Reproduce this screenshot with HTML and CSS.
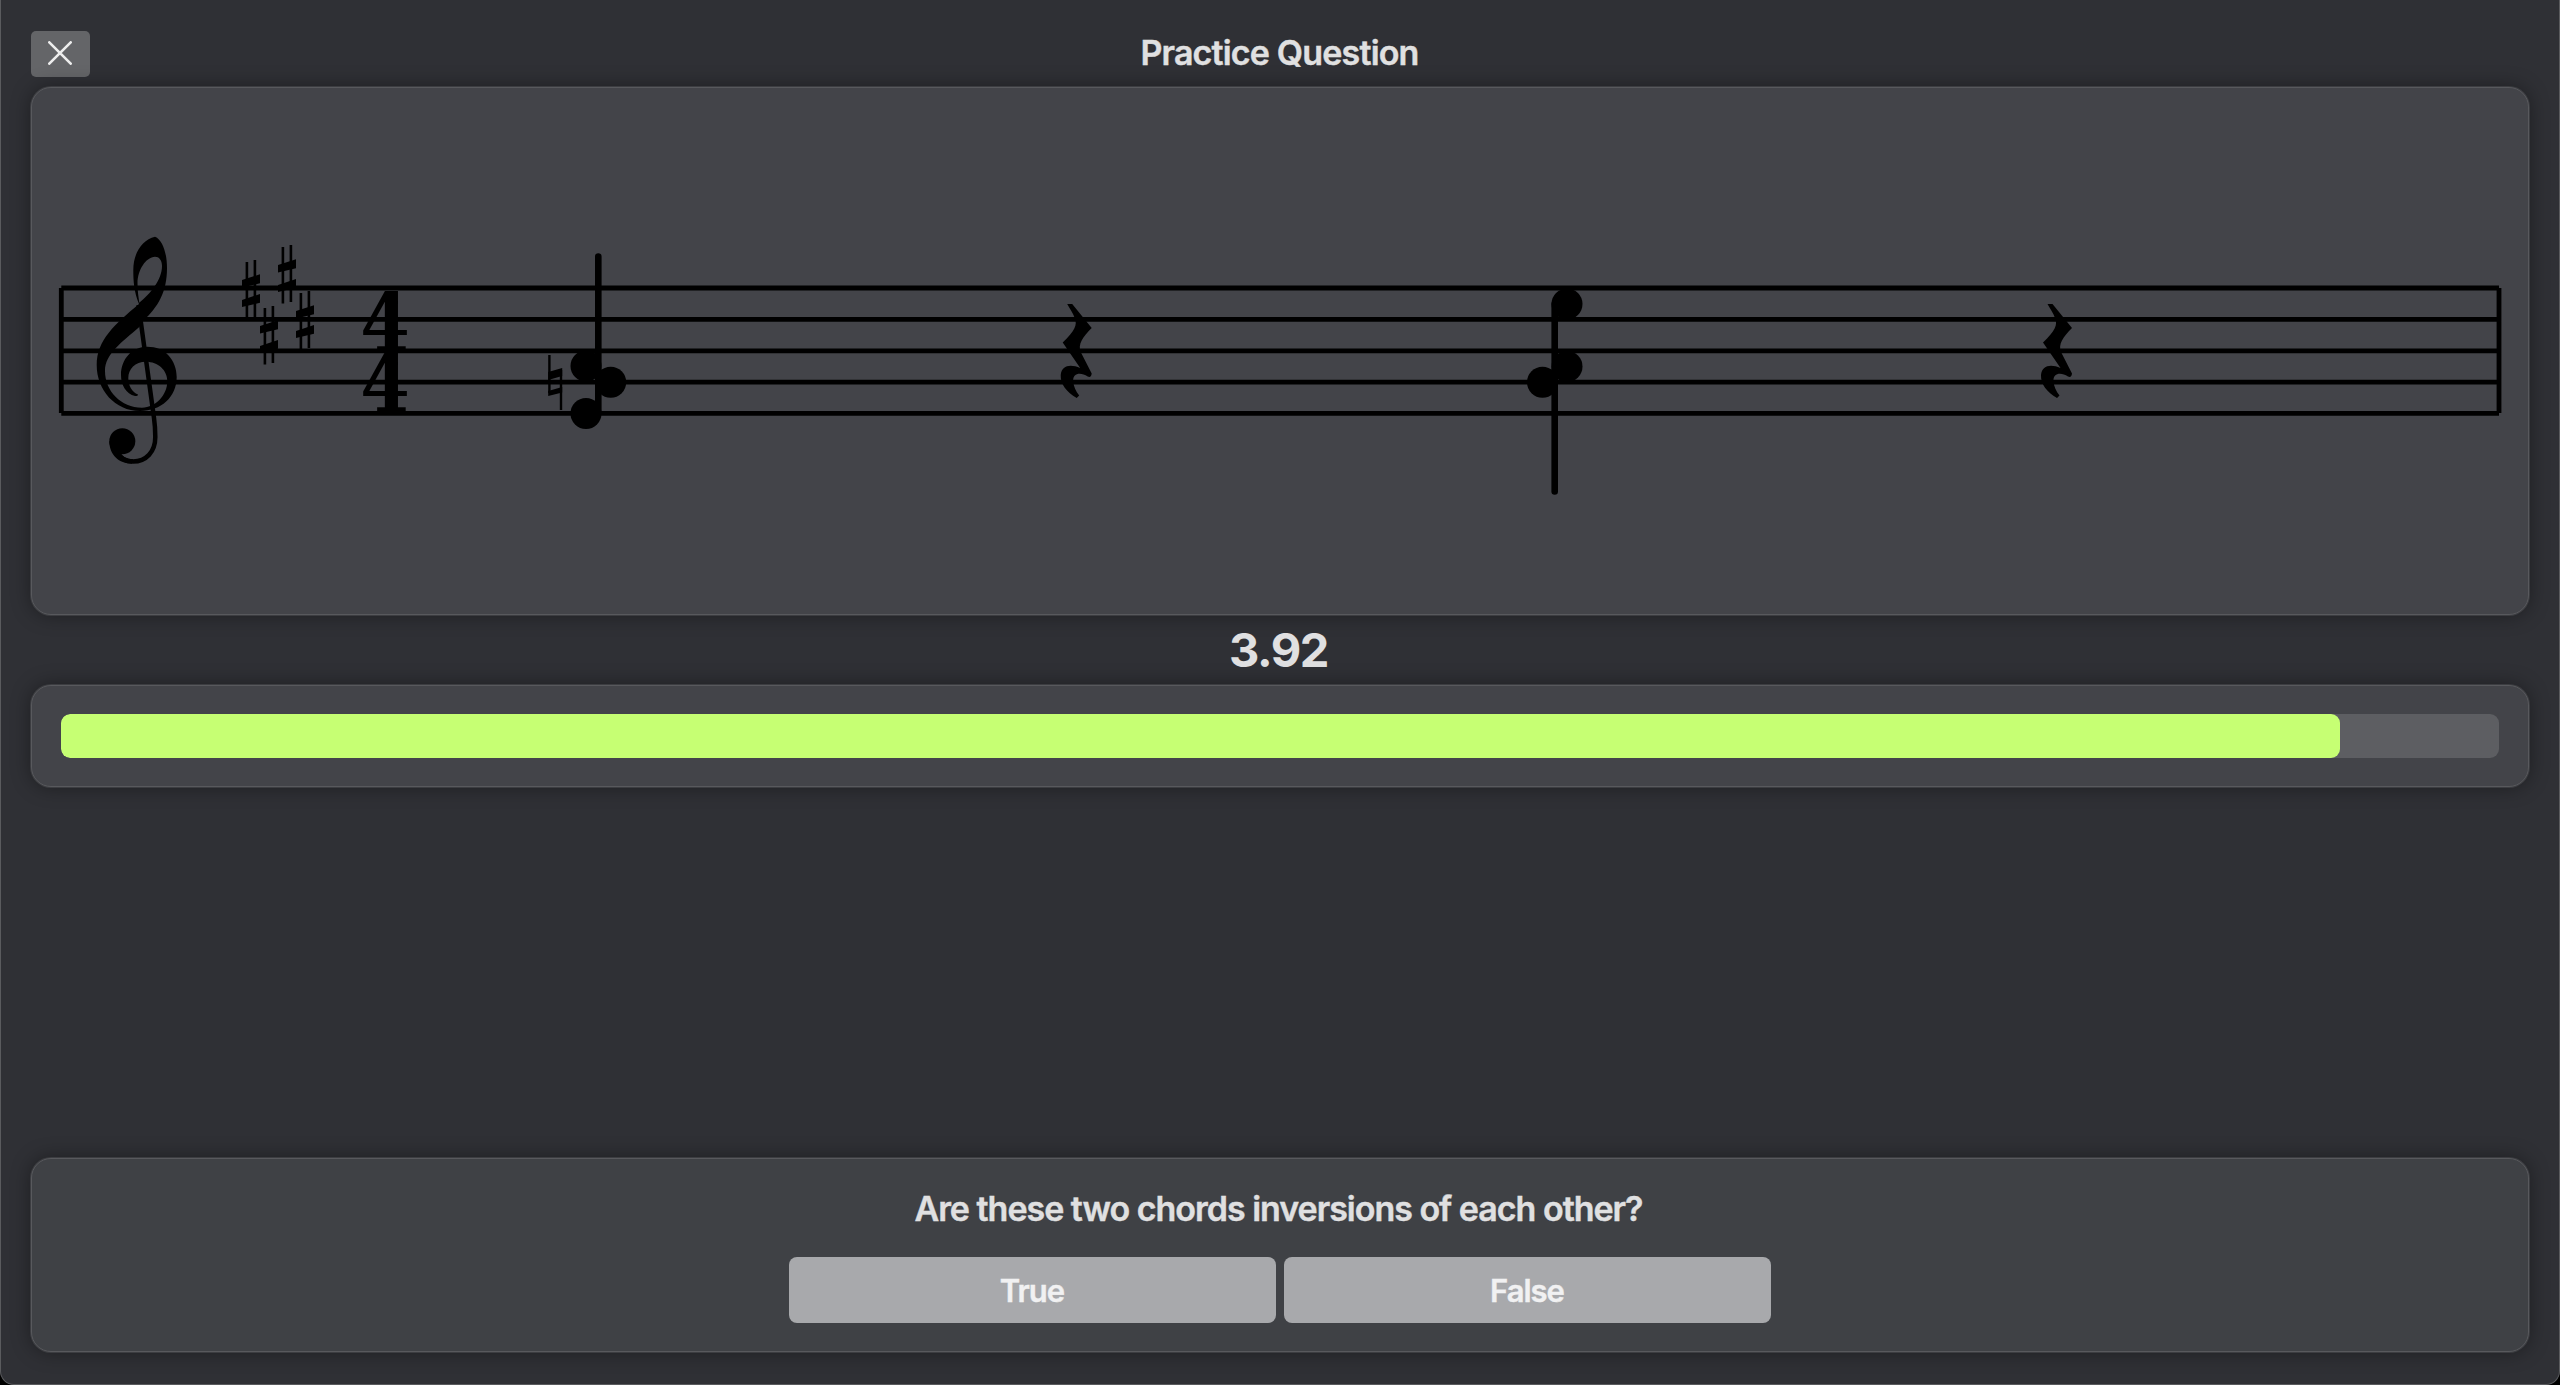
FILE: index.html
```html
<!DOCTYPE html>
<html lang="en">
<head>
<meta charset="utf-8">
<title>Practice Question</title>
<link rel="stylesheet" href="styles.css">
</head>
<body>
<main class="window">
  <header class="header">
    <button class="close" aria-label="Close">
      <svg width="24" height="24" viewBox="0 0 24 24"><path d="M1.300 1.300 22.700 22.700M22.700 1.300 1.300 22.700"/></svg>
    </button>
    <h1 class="title">Practice Question</h1>
  </header>

  <section class="card score">
    <svg class="staff" viewBox="31 87 2498 528">
      <defs>
        <g id="sharp">
          <path d="M4.900 2V58.500M12.900 0V57" stroke-width="2.600"/>
          <path class="ink" d="M0 20 18 14.300V23.300L0 27.500ZM0 40 18 34V42.700L0 47Z"/>
        </g>
        <path id="rest" class="ink" d="M6.500 0H11.500L31 24C22 33 17 40 20 48L31 69.500Q30.500 74 27 72.500C20 68 12 69 12.500 77C13 83 15 87 18.500 91.500L16 94C6 88 -.5 80 0 71C1 61 10 60 19.500 64L2 38.500C14 27 17 21 14 14C12.500 9 9 5 6.500 0Z"/>
      </defs>
      <path class="line" d="M61.300 288H2499M61.300 319.300H2499M61.300 350.800H2499M61.300 382.200H2499M61.300 413.300H2499M61.300 288V413M2499 288V413"/>

      <!-- treble clef -->
      <path class="ink" fill-rule="evenodd" d="M155 236.700C163 240 167 254 167 268C167 292 158 307 143 321L139 327.300C122 342 105 354 105 371C105 391 121 407.700 142 407.700C156 407.500 167.300 395 167.300 381C167.300 370 158 361.700 146 361.700C135 361.700 128.300 369 128.300 378C128.300 386 132 392 138 394.500Q138 396 135 396C126 394 121 385 121 375C121 359 132 346.700 147.300 346.700C165 346.700 176.700 360 176.700 377C176.700 397 161 411 140 411C115 411 96.700 390 96.700 365C96.700 340 115 324 139 304C134 292 133.300 281 133.300 270C133.300 253 142 240 155 236.700ZM155 256.700C146 257 137.500 270 137.500 283C137.500 291 138.500 297 139.300 302.700C150 294 162 280 162 266C162 260 159 256.700 155 256.700Z"/>
      <path class="curve" d="M138.500 305 154 418C155 425 155.300 431 155.300 437C155.300 452 146 461.500 133 461.500C127 461.500 121 459 118 453"/>
      <path class="ink" d="M109.300 441C109.300 455 119 463.700 132 463.700L133 459C127 459 123 457 121 454Z"/>
      <circle cx="122.300" cy="441.200" r="13"/>

      <use href="#sharp" x="242" y="260"/>
      <use href="#sharp" x="260" y="306"/>
      <use href="#sharp" x="278" y="245"/>
      <use href="#sharp" x="296" y="291"/>

      <text class="meter-digit" transform="translate(385 350.500) scale(.89 1)">4</text>
      <text class="meter-digit" transform="translate(385 412) scale(.89 1)">4</text>

      <path class="stem" d="M598.300 256.500V413"/>
      <circle cx="586" cy="366" r="15.500"/><circle cx="610.700" cy="382.300" r="15.500"/><circle cx="586" cy="413.500" r="15.500"/>
      <path d="M549.400 355V393M561 370V410" stroke-width="2.400"/>
      <path class="ink" d="M548.200 372 562.200 368V376L548.200 380ZM548.200 391 562.200 387V392.500L548.200 396Z"/>
      <use href="#rest" x="1060.700" y="304"/>
      <path class="stem" d="M1554.700 304V491.500"/>
      <circle cx="1567" cy="304" r="15.500"/><circle cx="1567" cy="366.500" r="15.500"/><circle cx="1542.500" cy="382.300" r="15.500"/>
      <use href="#rest" x="2041" y="304"/>
    </svg>
  </section>

  <div class="timer">3.92</div>

  <section class="card meter">
    <div class="track"><div class="fill" style="width: 93.480%"></div></div>
  </section>

  <section class="card question">
    <h2 class="prompt">Are these two chords inversions of each other?</h2>
    <div class="answers">
      <button class="answer">True</button>
      <button class="answer">False</button>
    </div>
  </section>
</main>
</body>
</html>
```
FILE: styles.css
```css
* { box-sizing: border-box; }
html, body { margin: 0; height: 100%; background: #000; }
body { overflow: hidden; }
button { border: 0; padding: 0; font: inherit; }
.window {
  display: flex;
  flex-direction: column;
  height: 1385px;
  padding: 30px 30px 32px;
  border: 1px solid #5a5b5e;
  border-top: 0;
  border-radius: 0 0 14px 14px;
  background: #2f3035;
  color: #e0e0e1;
  font-family: Inter, "Liberation Sans", sans-serif;
  font-weight: 600;
}
.header {
  display: grid;
  grid-template-columns: 60px 1fr 60px;
  height: 57px;
  align-items: start;
}
.close {
  display: grid;
  place-items: center;
  width: 59px;
  height: 46px;
  margin-top: 1px;
  border-radius: 5px;
  background: #646568;
}
.close svg { fill: none; stroke: #ededed; stroke-width: 2.6; stroke-linecap: round; margin-top: -2px; margin-left: -1px; }
.title { margin: 5px 0 0; padding-right: 1px; font-size: 34px; line-height: 36px; font-weight: 600; text-align: center; letter-spacing: -0.82px; -webkit-text-stroke: 0.4px; }
.card {
  flex: none;
  border: 1px solid #58595d;
  border-radius: 20px;
  background: #434449;
  box-shadow: 0 0 0 1px #3c3d41, 0 0 20px rgba(0, 0, 0, .4);
}
.score { height: 528px; }
.staff { display: block; width: 2498px; height: 528px; margin: -1px; fill: #000; stroke: #000; }
.staff .line { fill: none; stroke-width: 4.8; }
.staff .curve { fill: none; stroke-width: 4.5; }
.staff .stem { stroke-width: 6.6; stroke-linecap: round; }
.staff circle, .ink { stroke: none; }
.meter-digit { font: bold 80px "DejaVu Serif", serif; text-anchor: middle; stroke: none; }
.timer { height: 70px; padding-right: 3px; font-size: 47px; line-height: 70px; font-weight: 700; text-align: center; letter-spacing: -1.4px; }
.meter { height: 102px; padding: 28px 29px; }
.track { height: 44px; border-radius: 9px; background: #5d5e62; overflow: hidden; }
.fill { height: 100%; border-radius: 9px; background: #c6ff73; }
.question { height: 194px; margin-top: auto; padding-top: 30px; background: #3f4145; }
.prompt { margin: 0; padding-right: 3px; font-size: 34px; line-height: 40px; font-weight: 600; text-align: center; letter-spacing: -1.01px; -webkit-text-stroke: 0.4px; }
.answers { display: flex; justify-content: center; gap: 8px; margin-top: 28px; }
.answer { width: 487px; height: 66px; padding-right: 1px; border-radius: 8px; background: #a8a9ac; color: #f1f1f2; font-size: 31px; font-weight: 600; letter-spacing: -1px; -webkit-text-stroke: 0.4px; }
```
